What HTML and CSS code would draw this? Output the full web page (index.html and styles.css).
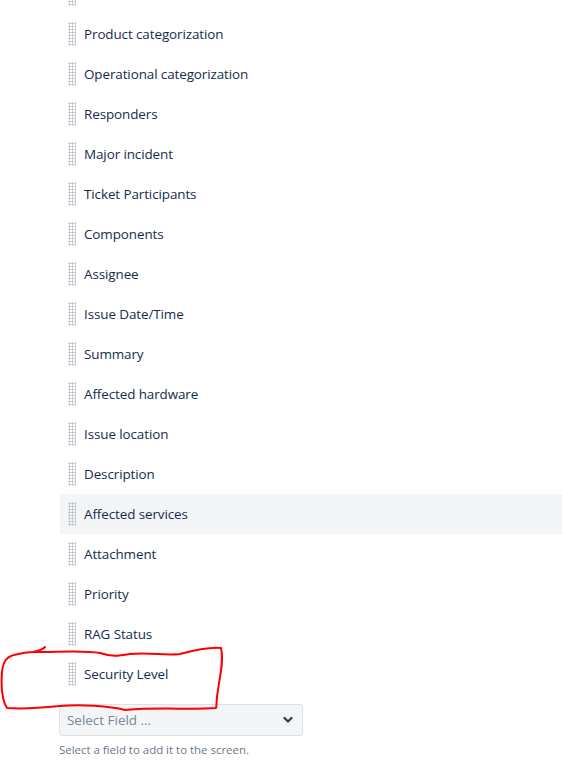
FILE: index.html
```html
<!DOCTYPE html>
<html>
<head>
<meta charset="utf-8">
<link rel="stylesheet" href="styles.css">
</head>
<body>
<div class="page">
  <ul class="fields">
    <li class="field"><span class="grip"></span></li>
    <li class="field"><span class="grip"></span><span class="label">Product categorization</span></li>
    <li class="field"><span class="grip"></span><span class="label">Operational categorization</span></li>
    <li class="field"><span class="grip"></span><span class="label">Responders</span></li>
    <li class="field"><span class="grip"></span><span class="label">Major incident</span></li>
    <li class="field"><span class="grip"></span><span class="label">Ticket Participants</span></li>
    <li class="field"><span class="grip"></span><span class="label">Components</span></li>
    <li class="field"><span class="grip"></span><span class="label">Assignee</span></li>
    <li class="field"><span class="grip"></span><span class="label">Issue Date/Time</span></li>
    <li class="field"><span class="grip"></span><span class="label">Summary</span></li>
    <li class="field"><span class="grip"></span><span class="label">Affected hardware</span></li>
    <li class="field"><span class="grip"></span><span class="label">Issue location</span></li>
    <li class="field"><span class="grip"></span><span class="label">Description</span></li>
    <li class="field hover"><span class="grip"></span><span class="label">Affected services</span></li>
    <li class="field"><span class="grip"></span><span class="label">Attachment</span></li>
    <li class="field"><span class="grip"></span><span class="label">Priority</span></li>
    <li class="field"><span class="grip"></span><span class="label">RAG Status</span></li>
    <li class="field"><span class="grip"></span><span class="label">Security Level</span></li>
  </ul>
  <div class="add">
    <div class="select">
      <span class="placeholder">Select Field ...</span>
      <svg class="chev" width="10" height="8" viewBox="0 0 10 8"><path d="M1.5 2 L5 5.5 L8.5 2" fill="none" stroke="#253858" stroke-width="2.2" stroke-linecap="round" stroke-linejoin="round"/></svg>
    </div>
    <div class="help">Select a field to add it to the screen.</div>
  </div>
  <svg class="annot" width="562" height="775" viewBox="0 0 562 775">
    <path d="M45 647 C42 650 38 651 33 652 C60 652 85 650 100 653 C112 657 118 656 130 654 C150 652 165 656 180 654 C195 650 210 647 221 648 C224 660 220 675 218 690 C216 700 217 705 216 708 C190 710 160 707 125 710 C110 706 80 704 60 706 C40 708 20 709 7 708 C2 700 1 685 2 672 C3 662 6 657 14 655 C22 653 28 652 33 652" fill="none" stroke="#ff0000" stroke-width="2" stroke-linecap="round" stroke-linejoin="round"/>
  </svg>
</div>
</body>
</html>
```
FILE: styles.css
```css
html, body {
  margin: 0;
  padding: 0;
  background: #ffffff;
}
body {
  font-family: "Open Sans", "Noto Sans", sans-serif;
  color: #172b4d;
  overflow: hidden;
}
.page {
  position: relative;
  width: 562px;
  height: 775px;
  overflow: hidden;
}
.fields {
  list-style: none;
  margin: -26px 0 0 0;
  padding: 0 0 0 60px;
}
.field {
  height: 40px;
  display: flex;
  align-items: center;
  border-radius: 3px 0 0 3px;
}
.field.hover {
  background: #f4f5f7;
}
.grip {
  width: 8px;
  height: 24px;
  margin-left: 8px;
  background-image: radial-gradient(circle, #bcc2cc 0.95px, transparent 1.15px);
  background-size: 3px 3px;
  background-position: 0 0;
}
.label {
  margin-left: 8px;
  font-size: 13.45px;
  letter-spacing: -0.1px;
  line-height: 20px;
}
.add {
  padding: 10px 0 0 59px;
}
.select {
  box-sizing: border-box;
  width: 244px;
  height: 32px;
  background: #f4f5f7;
  border: 1px solid #dfe1e6;
  border-radius: 3px;
  display: flex;
  align-items: center;
  justify-content: space-between;
  padding: 0 9px 0 7px;
}
.placeholder {
  font-size: 13.45px;
  color: #7a869a;
}
.chev {
  display: block;
}
.help {
  margin-top: 6px;
  font-size: 11.45px;
  color: #6b778c;
}
.annot {
  position: absolute;
  left: 0;
  top: 0;
  pointer-events: none;
}
```
